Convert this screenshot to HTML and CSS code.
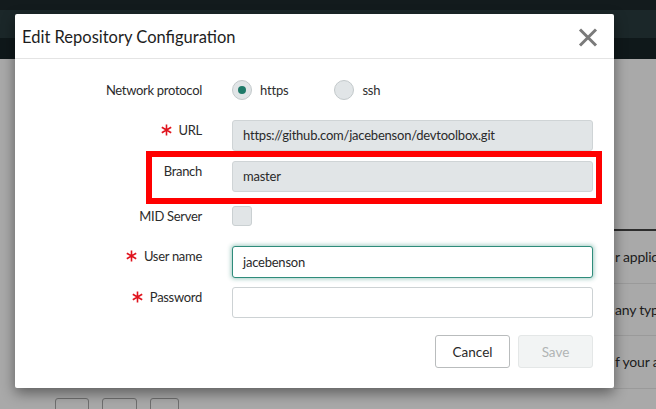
FILE: index.html
```html
<!DOCTYPE html>
<html>
<head>
<meta charset="utf-8">
<link rel="stylesheet" href="styles.css">
</head>
<body>
<div class="page">
  <div class="topbar">
    <div class="band band-a"></div>
    <div class="band band-b"></div>
    <div class="band band-c"></div>
  </div>
  <div class="content">
    <div class="bg-list">
      <div class="bg-row">r applica</div>
      <div class="bg-row">any type</div>
      <div class="bg-row">f your ap</div>
    </div>
    <div class="bg-tools">
      <span class="bg-btn w1"></span>
      <span class="bg-btn w2"></span>
      <span class="bg-btn w3"></span>
    </div>
  </div>

  <div class="modal">
    <div class="modal-header">
      <h1 class="modal-title">Edit Repository Configuration</h1>
      <svg class="close" width="20" height="19" viewBox="0 0 20 19"><path d="M2 1.5 L18 17.5 M18 1.5 L2 17.5" stroke="#7a7a7a" stroke-width="3" fill="none"/></svg>
    </div>
    <div class="modal-body">
      <div class="row row-proto">
        <div class="label lbl-mid">Network protocol</div>
        <div class="control radios">
          <span class="radio checked"><span class="dot"></span></span><span class="radio-text">https</span>
          <span class="radio"></span><span class="radio-text">ssh</span>
        </div>
      </div>
      <div class="row row-url">
        <div class="label"><svg class="req" width="11" height="12" viewBox="0 0 11 12"><path d="M5.5 0.5 V11.5 M0.8 3.2 L10.2 8.8 M10.2 3.2 L0.8 8.8" stroke="#e0141e" stroke-width="1.6" fill="none"/></svg>URL</div>
        <div class="control"><div class="input ro">https://github.com/jacebenson/devtoolbox.git</div></div>
      </div>
      <div class="row row-branch">
        <div class="label">Branch</div>
        <div class="control"><div class="input ro">master</div></div>
      </div>
      <div class="row row-mid">
        <div class="label lbl-mid">MID Server</div>
        <div class="control"><span class="checkbox"></span></div>
      </div>
      <div class="row row-user">
        <div class="label"><svg class="req" width="11" height="12" viewBox="0 0 11 12"><path d="M5.5 0.5 V11.5 M0.8 3.2 L10.2 8.8 M10.2 3.2 L0.8 8.8" stroke="#e0141e" stroke-width="1.6" fill="none"/></svg>User name</div>
        <div class="control"><div class="input focus">jacebenson</div></div>
      </div>
      <div class="row row-pass">
        <div class="label"><svg class="req" width="11" height="12" viewBox="0 0 11 12"><path d="M5.5 0.5 V11.5 M0.8 3.2 L10.2 8.8 M10.2 3.2 L0.8 8.8" stroke="#e0141e" stroke-width="1.6" fill="none"/></svg>Password</div>
        <div class="control"><div class="input"></div></div>
      </div>
      <div class="actions">
        <button class="btn">Cancel</button>
        <button class="btn disabled">Save</button>
      </div>
    </div>
    <div class="highlight"></div>
  </div>
</div>
</body>
</html>
```
FILE: styles.css
```css
* { box-sizing: border-box; }
html, body { margin: 0; padding: 0; }
body {
  width: 656px;
  height: 409px;
  overflow: hidden;
  background: #a9a9a9;
  font-family: Lato, "Open Sans", sans-serif;
  color: #2e2e2e;
}
.page { position: relative; width: 656px; height: 409px; overflow: hidden; }

.topbar { display: flex; flex-direction: column; }
.band-a { height: 10px; background: #131b1d; }
.band-b { height: 28px; background: #1b2729; }
.band-c { height: 21px; background: #0f181a; }

.content { position: relative; height: 350px; }
.bg-list {
  margin-top: 170px;
  margin-left: 614px;
  border-top: 2px solid #2d2d2d;
  overflow: hidden;
}
.bg-row {
  height: 52.5px;
  line-height: 51px;
  border-bottom: 1px solid #9a9a9a;
  font-size: 14px;
  color: #1c1c1c;
  white-space: nowrap;
  padding-left: 1px;
  letter-spacing: -0.2px;
}
.bg-tools { display: flex; gap: 13px; margin-left: 55px; margin-top: 9px; }
.bg-btn { display: block; height: 16px; border: 1px solid #6f6f6f; border-radius: 3px; }
.w1 { width: 34px; }
.w2 { width: 35px; }
.w3 { width: 29px; }

.modal {
  position: absolute;
  left: 15px;
  top: 14px;
  width: 599px;
  height: 374px;
  background: #fff;
  border-radius: 2px;
  box-shadow: 0 5px 14px rgba(0,0,0,0.45);
}
.modal-header {
  height: 45px;
  border-bottom: 1px solid #e4e4e4;
  display: flex;
  align-items: center;
  justify-content: space-between;
  padding: 0 16px 0 7px;
}
.modal-title {
  margin: 0;
  font-size: 16.5px;
  font-weight: 400;
  color: #1d1d1d;
  padding-top: 1px;
}
.close { display: block; margin-top: 2px; }

.modal-body { padding: 21px 21px 0 0; }
.row {
  display: grid;
  grid-template-columns: 187px 361px;
  column-gap: 30px;
}
.label {
  text-align: right;
  font-size: 13px;
  line-height: 20px;
  color: #2b2b2b;
  white-space: nowrap;
  letter-spacing: -0.3px;
}
.lbl-mid { align-self: center; }
.req { display: inline-block; vertical-align: -1px; margin-right: 7px; }

.row-url { margin-top: 20px; }
.row-branch { margin-top: 10px; }
.row-mid { margin-top: 14px; }
.row-user { margin-top: 20px; }
.row-pass { margin-top: 9px; }

.radios { display: flex; align-items: center; height: 19px; }
.radio {
  width: 20px;
  height: 20px;
  border-radius: 50%;
  background: #e1e5e7;
  border: 1px solid #c3c9cb;
  display: flex;
  align-items: center;
  justify-content: center;
}
.dot { width: 8px; height: 8px; border-radius: 50%; background: #1e7a69; }
.radio-text { font-size: 13px; margin-left: 8px; margin-right: 46px; letter-spacing: -0.2px; }

.input {
  height: 31px;
  border: 1px solid #cdd2d4;
  border-radius: 3px;
  background: #fff;
  font-size: 13px;
  line-height: 29px;
  padding-left: 10px;
  color: #2a2a2a;
  white-space: nowrap;
  overflow: hidden;
  letter-spacing: -0.22px;
}
.input.ro { background: #e1e5e7; border-color: #cfd4d6; }
.input.focus {
  height: 32px;
  line-height: 30px;
  border-color: #2f8c7b;
  box-shadow: 0 0 4px 1px rgba(47,140,123,0.45);
}
.checkbox {
  display: block;
  width: 20px;
  height: 20px;
  border-radius: 3px;
  background: #e1e5e7;
  border: 1px solid #cad0d2;
}

.actions {
  display: flex;
  justify-content: flex-end;
  gap: 8px;
  margin-top: 17px;
}
.btn {
  width: 75px;
  height: 33px;
  border: 1px solid #b9bcbd;
  border-radius: 3px;
  background: #fff;
  font-family: Lato, "Open Sans", sans-serif;
  font-size: 13.5px;
  color: #2a2a2a;
  padding: 0;
}
.btn.disabled { background: #f2f4f4; border-color: #e4e7e7; color: #b1b5b5; }

.highlight {
  position: absolute;
  left: 131px;
  top: 137px;
  width: 456px;
  height: 53px;
  border: 6px solid #ff0000;
}
```
